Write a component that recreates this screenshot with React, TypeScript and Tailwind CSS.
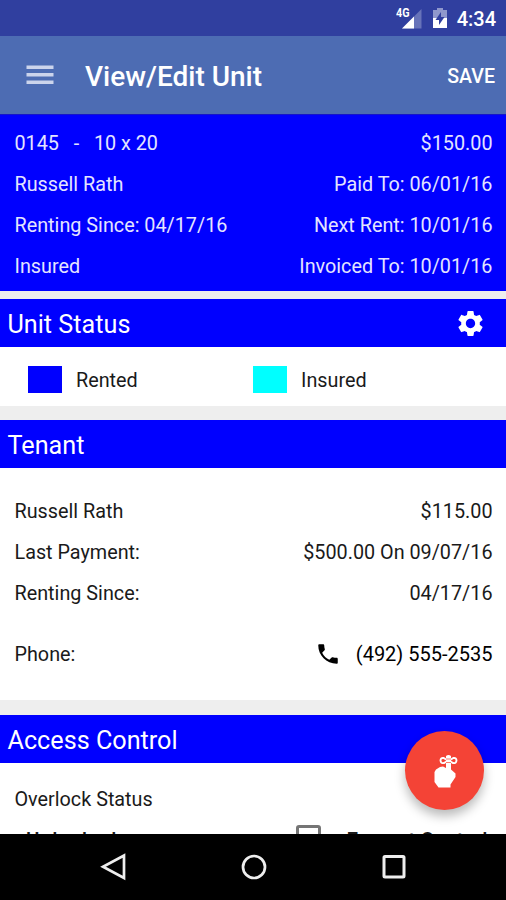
import React from 'react';
import { MdPhone, MdSettings } from 'react-icons/md';

const summaryRows = [
  { left: '0145   -   10 x 20', right: '$150.00' },
  { left: 'Russell Rath', right: 'Paid To: 06/01/16' },
  { left: 'Renting Since: 04/17/16', right: 'Next Rent: 10/01/16' },
  { left: 'Insured', right: 'Invoiced To: 10/01/16' },
];

const tenantRows = [
  { left: 'Russell Rath', right: '$115.00' },
  { left: 'Last Payment:', right: '$500.00 On 09/07/16' },
  { left: 'Renting Since:', right: '04/17/16' },
];

function StatusBar() {
  return (
    <div className="flex h-9 shrink-0 items-center justify-end bg-[#303f9f] pr-[10px] text-white">
      <svg width="28" height="26" viewBox="0 0 28 26" className="mr-[8px]">
        <path d="M25.500 4v19.500H6z" fill="#6773b9" />
        <path d="M18 11.500v12H6z" fill="#fff" />
        <text x="0" y="12" fontFamily="Roboto" fontSize="12" fontWeight="700" fill="#fff" textLength="13.500" lengthAdjust="spacingAndGlyphs">4G</text>
      </svg>
      <svg width="16" height="22" viewBox="0 0 16 22" className="mr-[9px]">
        <path d="M5 1h6v2h4v9H1V3h4z" fill="#8f98cc" />
        <path d="M1 11h14v10H1z" fill="#fff" />
        <path d="M9 5v5h3.500L7 18v-5H3.500z" fill="#303f9f" />
      </svg>
      <span className="pt-px text-[20px] leading-6 font-medium">4:34</span>
    </div>
  );
}

function AppBar() {
  return (
    <div className="flex h-[78px] shrink-0 items-center bg-[#4d6cb3] pr-[11px] pl-[26px] text-white">
      <svg width="28" height="20" viewBox="0 0 28 20" fill="#cbd4ec">
        <path d="M.5 .5h27v3.500H.5zM.5 8h27v3.500H.5zM.5 15.500h27V19H.5z" />
      </svg>
      <h1 className="ml-[31px] pt-[3px] text-[28px] font-medium">View/Edit Unit</h1>
      <span className="ml-auto pt-[3px] text-[19.6px] font-medium">SAVE</span>
    </div>
  );
}

function Row({ left, right }: { left: string; right?: React.ReactNode }) {
  return (
    <div className="flex h-[41px] items-center justify-between whitespace-pre">
      <span>{left}</span>
      {right && <span>{right}</span>}
    </div>
  );
}

function SectionHeader({ title, action }: { title: string; action?: React.ReactNode }) {
  return (
    <div className="flex h-12 items-center justify-between bg-[#0000ff] pr-5 pl-[7.5px] text-white">
      <h2 className="pt-[3px] text-[25.2px] leading-8">{title}</h2>
      {action}
    </div>
  );
}

function StatusKey({ label, children }: { label: string; children: React.ReactNode }) {
  return (
    <div className="flex w-[225px] items-center">
      {children}
      <span className="ml-[14px] pt-[2px]">{label}</span>
    </div>
  );
}

// pointing hand with a string tied round the finger
function ReminderButton() {
  return (
    <button className="absolute top-[731px] left-[405px] flex size-[79px] items-center justify-center rounded-full bg-[#f44336] pr-[2px] shadow-[0_6px_11px_rgba(0,0,0,0.28)]">
      <svg width="28" height="36" viewBox="0 0 28 36" fill="#fff">
        <path d="M16 3q2.500-2.200 5 0v13.500l4.500 4v3.500l-5 7.500v3H8.500L4.500 29V19l1.500-2.500 4-2.500 3-.5 3 1.500z" />
        <g fill="none" stroke="#fff" strokeWidth="1.900">
          <path d="M18 7.500l-4.500-2.500q-3-.5-3 2.700 .5 3 3.500 2.300z" />
          <path d="M19 7.500l4.500-2.500q3-.5 3 2.700-.5 3-3.500 2.300z" />
        </g>
        <path d="M16 6h5M16 9.500h5" stroke="#f44336" strokeWidth="0.700" />
      </svg>
    </button>
  );
}

function NavBar() {
  return (
    <div className="flex h-[66px] shrink-0 items-center justify-center gap-[112.5px] bg-black pl-px">
      <svg width="28" height="30" viewBox="0 0 28 30" fill="none" stroke="#eee" strokeWidth="2.700">
        <path d="M25 3.500v22.500L4 14.800z" />
      </svg>
      <svg width="28" height="30" viewBox="0 0 28 30" fill="none" stroke="#eee" strokeWidth="2.700">
        <circle cx="14" cy="15" r="11" />
      </svg>
      <svg width="28" height="30" viewBox="0 0 28 30" fill="none" stroke="#eee" strokeWidth="3">
        <rect x="4" y="4.500" width="20" height="20.500" rx="1" />
      </svg>
    </div>
  );
}

export default function App() {
  return (
    <div className="relative flex h-[900px] w-[506px] flex-col overflow-hidden bg-[#eeeeee] font-['Roboto',sans-serif] text-[19.8px] text-[#1a1a1a]">
      <StatusBar />
      <AppBar />
      <main className="min-h-0 flex-1 overflow-hidden">
        <section className="h-[177px] border-t border-[#1616c8] bg-[#0000ff] pt-[8px] pr-[13.5px] pl-[14.5px] text-[#e4e4ff]">
          {summaryRows.map((row) => (
            <Row key={row.left} {...row} />
          ))}
        </section>

        <section className="mt-2 bg-white">
          <SectionHeader title="Unit Status" action={<MdSettings size={31} />} />
          <div className="flex h-[59px] items-center pt-[6px] pl-[28px]">
            <StatusKey label="Rented">
              <div className="h-[27px] w-[34px] bg-[#0000ff]" />
            </StatusKey>
            <StatusKey label="Insured">
              <div className="h-[27px] w-[34px] bg-[#00ffff]" />
            </StatusKey>
          </div>
        </section>

        <section className="mt-[14px] bg-white">
          <SectionHeader title="Tenant" />
          <div className="h-[232px] pt-[23px] pr-[13.5px] pl-[14.5px]">
            {tenantRows.map((row) => (
              <Row key={row.left} {...row} />
            ))}
            <div className="mt-5">
              <Row
                left="Phone:"
                right={
                  <span className="flex items-center pb-[2px] text-[20px] text-black">
                    <MdPhone size={26} className="mr-[15px]" />
                    (492) 555-2535
                  </span>
                }
              />
            </div>
          </div>
        </section>

        <section className="mt-[15px] bg-white">
          <SectionHeader title="Access Control" />
          <div className="h-[200px] pt-[16px] pr-[18.5px] pl-[14.5px]">
            <Row left="Overlock Status" />
            <div className="flex h-[38px] items-center pt-[3px] pl-[11.5px] text-[20.5px] font-medium">
              <span className="tracking-[0.7px]">Unlocked</span>
              <div className="mb-[7px] ml-auto size-[25px] rounded-[3px] border-[3px] border-[#757575]" />
              <span className="ml-[25px]">Exempt Control</span>
            </div>
          </div>
        </section>
      </main>
      <NavBar />
      <ReminderButton />
    </div>
  );
}
